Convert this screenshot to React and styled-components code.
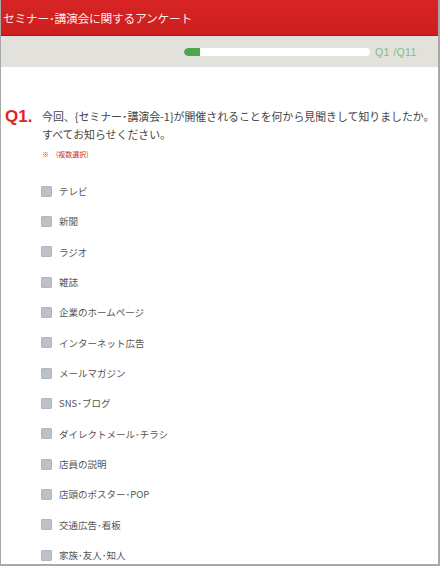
import React from "react";
import styled, {createGlobalStyle} from "styled-components";

const GlobalStyle = createGlobalStyle`
  html, body {
    margin: 0;
    padding: 0;
    background: #ffffff;
  }
  body {
    font-family: "Noto Sans CJK JP", "Liberation Sans", sans-serif;
  }
`

const Frame = styled.div`
  width: 440px;
  height: 566px;
  box-sizing: border-box;
  border-left: 1px solid #a8a8a8;
  border-right: 2px solid #a8a8a8;
  border-bottom: 2px solid #a8a8a8;
  overflow: hidden;
  display: flex;
  flex-direction: column;
  background: #fff;
`

const Header = styled.div`
  height: 36px;
  flex: none;
  background: linear-gradient(#d82424, #cc1e1e);
  border-bottom: 1px solid #a81414;
  box-sizing: border-box;
  display: flex;
  align-items: center;
  padding-left: 2px;
  color: #fbeaea;
  font-size: 11.8px;
  letter-spacing: -0.3px;
`

const ProgressBand = styled.div`
  height: 31px;
  flex: none;
  background: #e3e1dc;
  display: flex;
  align-items: center;
  justify-content: flex-end;
  padding-right: 23px;
  gap: 5px;
`

const Track = styled.div`
  width: 186px;
  height: 8px;
  border-radius: 4px;
  background: #ffffff;
  overflow: hidden;
  display: flex;
`

const Fill = styled.div`
  height: 100%;
  background: #4da54d;
  border-radius: 4px 0 0 4px;
`

const Counter = styled.div`
  width: 40px;
  white-space: nowrap;
  color: #7cbf7c;
  font-family: "Liberation Sans", sans-serif;
  font-size: 10.5px;
  letter-spacing: 0.4px;
`

const Body = styled.div`
  padding: 40px 0 0 4px;
`

const QuestionRow = styled.div`
  display: flex;
  align-items: flex-start;
`

const QNumber = styled.div`
  width: 37px;
  flex: none;
  color: #e02222;
  font-family: "Liberation Sans", sans-serif;
  font-weight: bold;
  font-size: 17px;
  line-height: 18px;
  margin-top: 1px;
`

const QText = styled.div`
  color: #444;
  font-size: 10.9px;
  line-height: 18px;
  white-space: nowrap;
`

const Note = styled.div`
  margin: 6px 0 0 37px;
  color: #d42a2a;
  font-size: 7px;
  line-height: 10px;
`

const Options = styled.ul`
  list-style: none;
  margin: 17px 0 0 36px;
  padding: 0;
`

const Option = styled.li`
  height: 30.33px;
  display: flex;
  align-items: center;
  gap: 7px;
  color: #555;
  font-size: 9.5px;
`

const Box = styled.span`
  width: 11px;
  height: 11px;
  border-radius: 2px;
  background: #bcc2c8;
  box-shadow: inset 0 0 0 1px #b0b6bd;
  flex: none;
`

const options = [
    "テレビ",
    "新聞",
    "ラジオ",
    "雑誌",
    "企業のホームページ",
    "インターネット広告",
    "メールマガジン",
    "SNS･ブログ",
    "ダイレクトメール･チラシ",
    "店員の説明",
    "店頭のポスター･POP",
    "交通広告･看板",
    "家族･友人･知人",
]

export default function App(){
    const current = 1
    const total = 11
    return(
        <>
            <GlobalStyle/>
            <Frame>
                <Header>セミナー･講演会に関するアンケート</Header>
                <ProgressBand>
                    <Track>
                        <Fill style={{width: `${(current / total) * 100 * 0.95}%`}}/>
                    </Track>
                    <Counter>Q{current} /Q{total}</Counter>
                </ProgressBand>
                <Body>
                    <QuestionRow>
                        <QNumber>Q1.</QNumber>
                        <QText>
                            今回、{"{"}セミナー･講演会-1{"}"}が開催されることを何から見聞きして知りましたか。<br/>
                            すべてお知らせください。
                        </QText>
                    </QuestionRow>
                    <Note>※　(複数選択)</Note>
                    <Options>
                        {options.map(o => (
                            <Option key={o}>
                                <Box/>
                                {o}
                            </Option>
                        ))}
                    </Options>
                </Body>
            </Frame>
        </>
    )
}
